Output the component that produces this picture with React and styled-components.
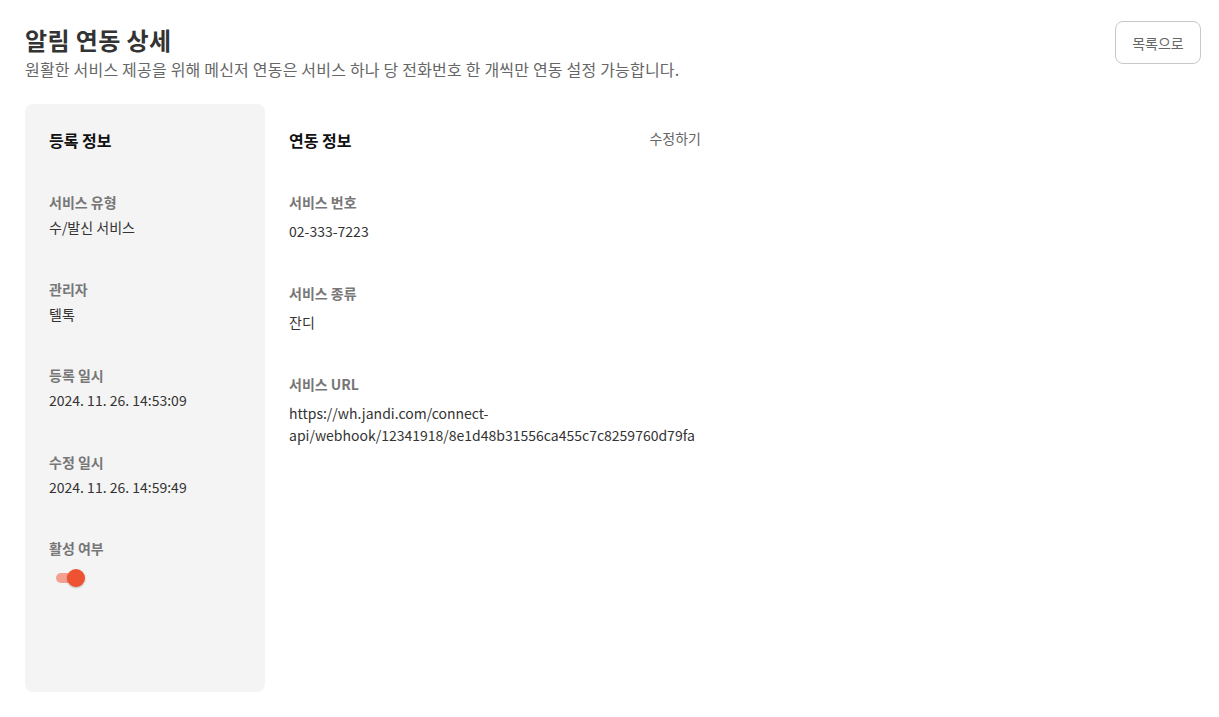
import React from 'react'
import styled, { createGlobalStyle } from 'styled-components'

const GlobalStyle = createGlobalStyle`
  body {
    margin: 0;
    background: #fff;
    font-family: "Noto Sans CJK KR", "Noto Sans", sans-serif;
    color: #333;
  }
`

const Page = styled.div`
  padding: 22px 18px 25px 25px;
`

const Header = styled.header`
  display: flex;
  justify-content: space-between;
  align-items: flex-start;
`

const Title = styled.h1`
  margin: 0;
  font-size: 24px;
  font-weight: 700;
  line-height: 36px;
  letter-spacing: 0.4px;
  color: #333;
`

const Subtitle = styled.p`
  margin: 0;
  font-size: 16px;
  line-height: 22px;
  letter-spacing: 0.2px;
  color: #666;
`

const OutlineButton = styled.button`
  width: 86px;
  height: 43px;
  margin-top: -1px;
  border: 1px solid #c8c8c8;
  border-radius: 8px;
  background: #fff;
  font-family: inherit;
  font-size: 14px;
  color: #666;
`

const Body = styled.div`
  display: flex;
  gap: 24px;
  margin-top: 24px;
`

const Card = styled.section`
  width: 240px;
  height: 588px;
  box-sizing: border-box;
  padding: 24px 24px;
  background: #f4f4f4;
  border-radius: 8px;
`

const Panel = styled.section`
  width: 412px;
  padding: 24px 0;
`

const SectionHead = styled.div`
  display: flex;
  justify-content: space-between;
  align-items: center;
  height: 24px;
  margin-bottom: 40px;
`

const SectionTitle = styled.h2`
  margin: 0;
  font-size: 16px;
  font-weight: 700;
  line-height: 24px;
  color: #111;
`

const EditLink = styled.span`
  font-size: 14px;
  color: #666;
  margin-top: -5px;
`

const Field = styled.div`
  margin-bottom: ${p => (p.$wide ? 41 : 41.5)}px;
`

const Label = styled.div`
  font-size: 14px;
  font-weight: 700;
  line-height: 20px;
  color: #777;
  margin-bottom: ${p => (p.$wide ? 8 : 5)}px;
`

const Value = styled.div`
  font-size: 14px;
  line-height: ${p => (p.$wide ? 22 : 20)}px;
  color: #333;
`

const Toggle = styled.div`
  position: relative;
  width: 26px;
  height: 10px;
  margin: 15px 0 0 7px;
  border-radius: 5px;
  background: #f4a090;

  &::after {
    content: '';
    position: absolute;
    right: -3px;
    top: -4px;
    width: 18px;
    height: 18px;
    border-radius: 50%;
    background: #ef5230;
    box-shadow: 0 1px 2px rgba(0, 0, 0, 0.25);
  }
`

const registration = [
  ['서비스 유형', '수/발신 서비스'],
  ['관리자', '텔톡'],
  ['등록 일시', '2024. 11. 26. 14:53:09'],
  ['수정 일시', '2024. 11. 26. 14:59:49'],
]

const integration = [
  ['서비스 번호', '02-333-7223'],
  ['서비스 종류', '잔디'],
  ['서비스 URL', 'https://wh.jandi.com/connect-api/webhook/12341918/8e1d48b31556ca455c7c8259760d79fa'],
]

export default function App() {
  return (
    <>
      <GlobalStyle />
      <Page>
        <Header>
          <div>
            <Title>알림 연동 상세</Title>
            <Subtitle>원활한 서비스 제공을 위해 메신저 연동은 서비스 하나 당 전화번호 한 개씩만 연동 설정 가능합니다.</Subtitle>
          </div>
          <OutlineButton>목록으로</OutlineButton>
        </Header>
        <Body>
          <Card>
            <SectionHead>
              <SectionTitle>등록 정보</SectionTitle>
            </SectionHead>
            {registration.map(([label, value]) => (
              <Field key={label}>
                <Label>{label}</Label>
                <Value>{value}</Value>
              </Field>
            ))}
            <Field>
              <Label>활성 여부</Label>
              <Toggle />
            </Field>
          </Card>
          <Panel>
            <SectionHead>
              <SectionTitle>연동 정보</SectionTitle>
              <EditLink>수정하기</EditLink>
            </SectionHead>
            {integration.map(([label, value]) => (
              <Field key={label} $wide>
                <Label $wide>{label}</Label>
                <Value $wide>{value}</Value>
              </Field>
            ))}
          </Panel>
        </Body>
      </Page>
    </>
  )
}
